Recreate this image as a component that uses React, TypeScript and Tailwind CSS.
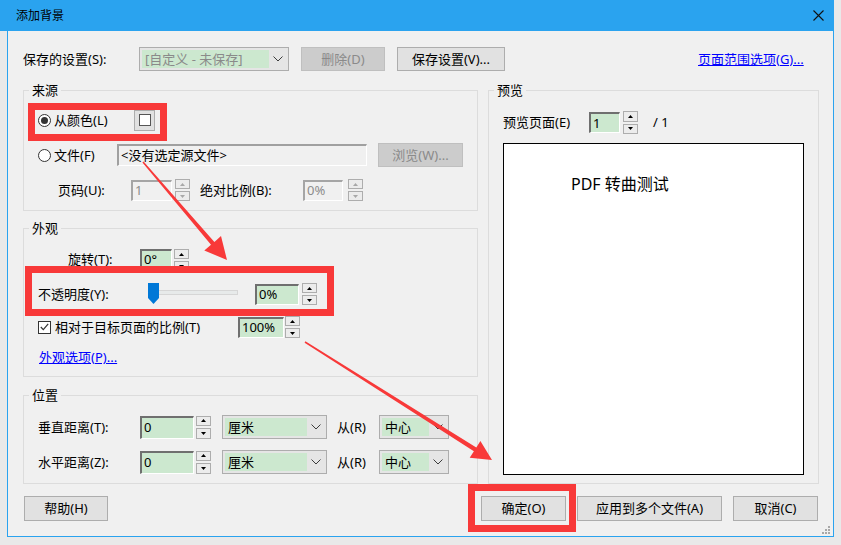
import React from "react";

function Tri({ down, gray }: { down?: boolean; gray?: boolean }) {
  return (
    <svg width="5" height="3" viewBox="0 0 5 3">
      <polygon
        points={down ? "0,0 5,0 2.5,3" : "2.5,0 5,3 0,3"}
        fill={gray ? "#a8a8a8" : "#000"}
      />
    </svg>
  );
}

function Spin({ h, gray }: { h: string; gray?: boolean }) {
  return (
    <div className={`${h} w-[15px] flex flex-col gap-[2px]`}>
      <div className="flex-1 border border-[#adadad] bg-[#ececec] flex items-center justify-center">
        <Tri gray={gray} />
      </div>
      <div className="flex-1 border border-[#adadad] bg-[#ececec] flex items-center justify-center">
        <Tri down gray={gray} />
      </div>
    </div>
  );
}

function Field({
  cls,
  value,
  tone,
}: {
  cls: string;
  value: string;
  tone: "green" | "plain" | "off";
}) {
  const look =
    tone === "green"
      ? "bg-[#cce8cf] text-black border-t-[#6f6f6f] border-l-[#6f6f6f]"
      : tone === "plain"
      ? "bg-[#f0f0f0] text-black border-t-[#a0a0a0] border-l-[#a0a0a0]"
      : "bg-[#f0f0f0] text-[#8c8c8c] border-t-[#a5a5a5] border-l-[#a5a5a5]";
  return (
    <div
      className={`${cls} ${look} flex items-center pl-[2px] border-t-2 border-l-2 border-r border-b border-r-white border-b-white leading-none whitespace-nowrap`}
    >
      {value}
    </div>
  );
}

function Chevron() {
  return (
    <svg width="10" height="6" viewBox="0 0 10 6">
      <polyline points="0.5,0.5 5,5 9.5,0.5" fill="none" stroke="#3c3c3c" strokeWidth="1" />
    </svg>
  );
}

function Select({
  cls,
  inner,
  value,
  muted,
}: {
  cls: string;
  inner: string;
  value: string;
  muted?: boolean;
}) {
  return (
    <div className={`${cls} border border-[#adadad] bg-[#e5e5e5] flex items-stretch p-[2px]`}>
      <div
        className={`${inner} bg-[#cce8cf] flex items-center pl-[3px] leading-none whitespace-nowrap ${
          muted ? "text-[#8a8a8a]" : "text-black"
        }`}
      >
        {value}
      </div>
      <div className="flex-1 flex items-center justify-center">
        <Chevron />
      </div>
    </div>
  );
}

function Btn({
  cls,
  children,
  disabled,
}: {
  cls: string;
  children: React.ReactNode;
  disabled?: boolean;
}) {
  return (
    <div
      className={`${cls} flex items-center justify-center border leading-none whitespace-nowrap ${
        disabled
          ? "border-[#bfbfbf] bg-[#cccccc] text-[#8a8a8a]"
          : "border-[#adadad] bg-[#e1e1e1] text-black"
      }`}
    >
      {children}
    </div>
  );
}

function Radio({ on }: { on?: boolean }) {
  return (
    <div className="w-[13px] h-[13px] shrink-0 rounded-full border border-[#333] bg-white flex items-center justify-center">
      {on && <div className="w-[7px] h-[7px] rounded-full bg-[#333]" />}
    </div>
  );
}

function Check() {
  return (
    <div className="w-[13px] h-[13px] shrink-0 border border-[#333] bg-white flex items-center justify-center">
      <svg width="9" height="8" viewBox="0 0 9 8">
        <polyline points="0.8,4 3.3,6.6 8.2,0.8" fill="none" stroke="#333" strokeWidth="1.2" />
      </svg>
    </div>
  );
}

function Group({
  title,
  cls,
  children,
}: {
  title: string;
  cls: string;
  children: React.ReactNode;
}) {
  return (
    <div className={`${cls} border border-[#dcdcdc]`}>
      <div className="-mt-[9px] ml-[5px] w-fit px-[3px] bg-[#f0f0f0] leading-[16px]">{title}</div>
      {children}
    </div>
  );
}

type P = [number, number];

function arrowPoints(tail: P, tip: P, w0: number, w1: number, headLen: number, headHalf: number) {
  const dx = tip[0] - tail[0];
  const dy = tip[1] - tail[1];
  const len = Math.hypot(dx, dy);
  const ux = dx / len;
  const uy = dy / len;
  const nx = -uy;
  const ny = ux;
  const bx = tip[0] - ux * headLen;
  const by = tip[1] - uy * headLen;
  const pts: P[] = [
    [tail[0] + nx * w0, tail[1] + ny * w0],
    [bx + nx * w1, by + ny * w1],
    [bx + nx * headHalf, by + ny * headHalf],
    tip,
    [bx - nx * headHalf, by - ny * headHalf],
    [bx - nx * w1, by - ny * w1],
    [tail[0] - nx * w0, tail[1] - ny * w0],
  ];
  return pts.map((p) => `${p[0].toFixed(1)},${p[1].toFixed(1)}`).join(" ");
}

export default function App() {
  return (
    <div className="relative w-[841px] h-[545px] overflow-hidden bg-[#e9e9e9] text-[13px] text-black [font-family:'Noto_Sans','Noto_Sans_CJK_SC',sans-serif]">
      {/* title bar */}
      <div className="w-[834px] h-[31px] bg-[#2aa3ef] flex items-center justify-between pl-[16px] pr-[10px]">
        <span className="text-[12px] leading-none">添加背景</span>
        <svg width="11" height="11" viewBox="0 0 11 11">
          <path d="M0.5 0.5L10.5 10.5M10.5 0.5L0.5 10.5" stroke="#111" strokeWidth="1.1" />
        </svg>
      </div>

      <div className="relative ml-[7px] w-[827px] h-[506px] bg-[#f0f0f0] border-l border-r border-b border-[#2aa3ef] pl-[15px] pt-[16px]">
        {/* saved settings row */}
        <div className="flex items-center h-[24px]">
          <span className="w-[116px] leading-none">保存的设置(S):</span>
          <Select cls="w-[150px] h-[24px]" inner="w-[127px]" value="[自定义 - 未保存]" muted />
          <Btn cls="ml-[12px] w-[84px] h-[24px]" disabled>
            删除(D)
          </Btn>
          <Btn cls="ml-[12px] w-[108px] h-[24px]">保存设置(V)...</Btn>
          <span className="ml-[193px] text-[#0000ff] underline leading-none">页面范围选项(G)...</span>
        </div>

        <div className="mt-[19px] flex">
          <div className="w-[455px] flex flex-col">
            <Group title="来源" cls="h-[121px]">
              <div className="mt-[11px] h-[22px] flex items-center">
                <div className="ml-[14px]">
                  <Radio on />
                </div>
                <span className="ml-[3px] w-[80px] leading-none">从颜色(L)</span>
                <div className="w-[21px] h-[21px] border border-[#adadad] bg-[#e1e1e1] flex items-center justify-center">
                  <div className="w-[12px] h-[12px] border border-[#555] bg-white" />
                </div>
              </div>
              <div className="mt-[12px] h-[24px] flex items-center">
                <div className="ml-[14px]">
                  <Radio />
                </div>
                <span className="ml-[3px] w-[63px] leading-none">文件(F)</span>
                <Field cls="w-[250px] h-[22px]" value="<没有选定源文件>" tone="plain" />
                <Btn cls="ml-[11px] w-[85px] h-[24px]" disabled>
                  浏览(W)...
                </Btn>
              </div>
              <div className="mt-[12px] h-[22px] flex items-center">
                <span className="ml-[34px] w-[73px] leading-none">页码(U):</span>
                <Field cls="w-[41px] h-[21px]" value="1" tone="off" />
                <div className="ml-[3px]">
                  <Spin h="h-[22px]" gray />
                </div>
                <span className="ml-[10px] w-[103px] leading-none">绝对比例(B):</span>
                <Field cls="w-[40px] h-[21px]" value="0%" tone="off" />
                <div className="ml-[5px]">
                  <Spin h="h-[22px]" gray />
                </div>
              </div>
            </Group>

            <Group title="外观" cls="mt-[17px] h-[149px]">
              <div className="mt-[13px] h-[22px] flex items-start">
                <span className="ml-[44px] w-[72px] leading-none mt-[4px]">旋转(T):</span>
                <Field cls="w-[32px] h-[19px]" value="0°" tone="green" />
                <div className="ml-[2px]">
                  <Spin h="h-[22px]" />
                </div>
              </div>
              <div className="mt-[12px] h-[22px] flex items-center">
                <span className="ml-[14px] w-[110px] leading-none">不透明度(Y):</span>
                <div className="relative w-[90px] h-[22px]">
                  <div className="mt-[7px] ml-[5px] w-[85px] h-[5px] bg-[#e7eaea] border border-[#d6d6d6]" />
                  <svg className="absolute left-0 top-0" width="11" height="21" viewBox="0 0 11 21">
                    <polygon points="0,0 11,0 11,15 5.5,21 0,15" fill="#0078d7" />
                  </svg>
                </div>
                <Field cls="ml-[17px] w-[44px] h-[21px]" value="0%" tone="green" />
                <div className="ml-[3px]">
                  <Spin h="h-[22px]" />
                </div>
              </div>
              <div className="mt-[11px] h-[22px] flex items-center">
                <div className="ml-[14px]">
                  <Check />
                </div>
                <span className="ml-[4px] w-[183px] leading-none">相对于目标页面的比例(T)</span>
                <Field cls="w-[46px] h-[21px]" value="100%" tone="green" />
                <div className="ml-[1px]">
                  <Spin h="h-[22px]" />
                </div>
              </div>
              <div className="mt-[11px] h-[16px] flex items-center">
                <span className="ml-[15px] text-[#0000ff] underline leading-none">外观选项(P)...</span>
              </div>
            </Group>

            <Group title="位置" cls="mt-[18px] h-[89px]">
              {[
                ["垂直距离(T):", "mt-[12px]"],
                ["水平距离(Z):", "mt-[11px]"],
              ].map(([label, mt]) => (
                <div key={label} className={`${mt} h-[24px] flex items-center`}>
                  <span className="ml-[14px] w-[102px] leading-none">{label}</span>
                  <Field cls="w-[54px] h-[23px]" value="0" tone="green" />
                  <div className="ml-[2px]">
                    <Spin h="h-[23px]" />
                  </div>
                  <Select cls="ml-[11px] w-[105px] h-[24px]" inner="w-[82px]" value="厘米" />
                  <span className="ml-[10px] w-[42px] leading-none">从(R)</span>
                  <Select cls="w-[70px] h-[24px]" inner="w-[47px]" value="中心" />
                </div>
              ))}
            </Group>
          </div>

          <Group title="预览" cls="ml-[10px] w-[331px] h-[394px]">
            <div className="mt-[13px] h-[23px] flex items-center">
              <span className="ml-[14px] w-[86px] leading-none">预览页面(E)</span>
              <Field cls="w-[31px] h-[21px]" value="1" tone="green" />
              <div className="ml-[3px]">
                <Spin h="h-[23px]" />
              </div>
              <span className="ml-[15px] leading-none">/ 1</span>
            </div>
            <div className="mt-[9px] ml-[14px] w-[301px] h-[332px] border border-black bg-white pt-[30px] pl-[67px] text-[16px] leading-[20px]">
              PDF 转曲测试
            </div>
          </Group>
        </div>

        {/* bottom buttons */}
        <div className="mt-[12px] flex">
          <Btn cls="ml-[1px] w-[84px] h-[25px]">帮助(H)</Btn>
          <Btn cls="ml-[373px] w-[85px] h-[25px]">确定(O)</Btn>
          <Btn cls="ml-[11px] w-[145px] h-[25px]">应用到多个文件(A)</Btn>
          <Btn cls="ml-[11px] w-[85px] h-[25px]">取消(C)</Btn>
        </div>

        {/* size grip */}
        <svg className="absolute right-[2px] bottom-[1px]" width="9" height="9" viewBox="0 0 9 9">
          {[
            [7, 1],
            [4, 4],
            [7, 4],
            [1, 7],
            [4, 7],
            [7, 7],
          ].map(([x, y]) => (
            <rect key={`${x}-${y}`} x={x - 1} y={y - 1} width="2" height="2" fill="#a8a8a8" />
          ))}
        </svg>
      </div>

      {/* annotation overlays */}
      <div className="absolute left-[28px] top-[103px] w-[139px] h-[38px] border-[7px] border-[#f83939]" />
      <div className="absolute left-[25px] top-[266px] w-[309px] h-[50px] border-[7px] border-[#f83939]" />
      <div className="absolute left-[468px] top-[484px] w-[108px] h-[48px] border-[7px] border-[#f83939]" />
      <svg className="absolute left-0 top-0 pointer-events-none" width="841" height="545">
        <polygon points={arrowPoints([143, 162], [227, 260], 0.8, 2.2, 22, 11)} fill="#f83939" />
        <polygon points={arrowPoints([305, 342], [492, 460], 0.8, 2.2, 20, 10)} fill="#f83939" />
      </svg>
    </div>
  );
}
